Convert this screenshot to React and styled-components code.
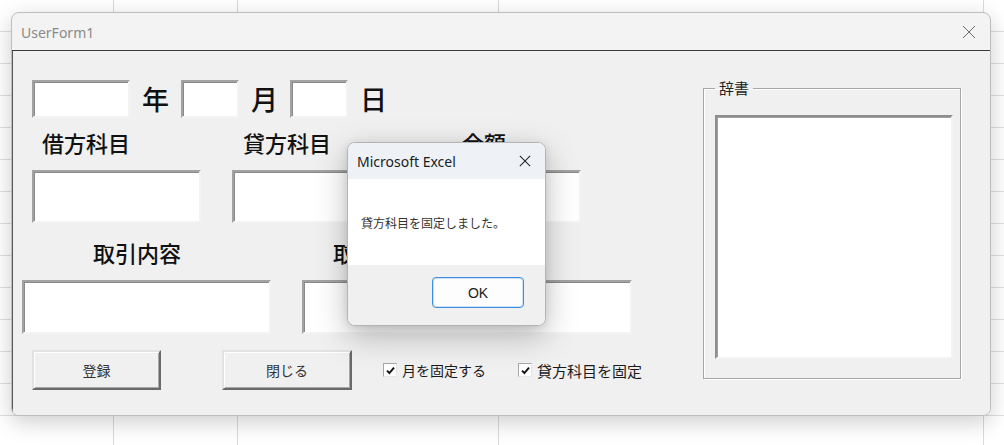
import styled, { createGlobalStyle } from "styled-components";

const GlobalStyle = createGlobalStyle`
  html, body {
    margin: 0;
    padding: 0;
  }
  body {
    width: 1004px;
    height: 445px;
    overflow: hidden;
    font-family: "Noto Sans", "Noto Sans CJK JP", sans-serif;
  }
`;

const Sheet = styled.div`
  position: relative;
  width: 1004px;
  height: 445px;
  box-sizing: border-box;
  padding: 12px 0 0 11px;
  background-color: #fff;
  background-image: linear-gradient(#d9d9d9, #d9d9d9),
    linear-gradient(#d9d9d9, #d9d9d9), linear-gradient(#d9d9d9, #d9d9d9),
    linear-gradient(#d9d9d9, #d9d9d9),
    repeating-linear-gradient(
      to bottom,
      transparent 0,
      transparent 31px,
      #dedede 31px,
      #dedede 32px
    );
  background-size: 1px 100%, 1px 100%, 1px 100%, 1px 100%, 100% 100%;
  background-position: 113px 0, 237px 0, 498px 0, 983px 0, 0 0;
  background-repeat: no-repeat;
`;

const Window = styled.div`
  width: 980px;
  height: 404px;
  box-sizing: border-box;
  display: flex;
  flex-direction: column;
  background: #f3f3f3;
  border: 1px solid #bdbdbd;
  border-radius: 8px;
  box-shadow: 0 6px 22px rgba(0, 0, 0, 0.2);
  overflow: hidden;
`;

const TitleBar = styled.div`
  height: 37px;
  flex-shrink: 0;
  display: flex;
  align-items: center;
  justify-content: space-between;
  padding: 0 14px 0 9px;
  border-bottom: 1px solid #3c3c3c;
`;

const Title = styled.span`
  font-size: 14px;
  color: #8a8a8a;
  padding-top: 2px;
`;

const Client = styled.div`
  flex: 1;
  display: flex;
  background: #f0f0f0;
  border-left: 1px solid #5a5a5a;
`;

const LeftPane = styled.div`
  flex: 1;
  display: flex;
  flex-direction: column;
  padding-left: 9px;
`;

const Row = styled.div`
  display: flex;
  align-items: ${(p) => p.$align || "flex-start"};
  gap: ${(p) => p.$gap || 0}px;
  margin-top: ${(p) => p.$top}px;
  padding-left: ${(p) => p.$left || 0}px;
`;

const TextBox = styled.input`
  display: block;
  width: ${(p) => p.$w}px;
  height: ${(p) => p.$h}px;
  box-sizing: border-box;
  margin: 0;
  padding: 0;
  background: #fff;
  border: 2px solid;
  border-color: #a2a2a2 #f3f3f3 #f3f3f3 #a2a2a2;
  box-shadow: inset 1px 1px 0 #8a8a8a;
  outline: none;
`;

const Unit = styled.span`
  font-family: "Noto Sans CJK JP", sans-serif;
  font-weight: 500;
  font-size: 27px;
  line-height: 38px;
  color: #111;
  margin: 0 12px 0 12px;
`;

const Field = styled.div`
  display: flex;
  flex-direction: column;
  gap: 16px;
  width: ${(p) => p.$w}px;
`;

const FieldLabel = styled.div`
  font-family: "Noto Sans CJK JP", sans-serif;
  font-weight: 500;
  font-size: 22px;
  line-height: 24px;
  color: #111;
  white-space: nowrap;
  padding-left: ${(p) => p.$indent}px;
`;

const Button = styled.button`
  width: ${(p) => p.$w}px;
  height: 40px;
  box-sizing: border-box;
  padding: 0;
  background: #f0f0f0;
  border: 2px solid;
  border-color: #e2e2e2 #6a6a6a #6a6a6a #e2e2e2;
  box-shadow: inset 1px 1px 0 #fff, inset -1px -1px 0 #a8a8a8;
  font-family: "Noto Sans CJK JP", sans-serif;
  font-size: 14px;
  color: #333;
`;

const Check = styled.label`
  display: flex;
  align-items: center;
  gap: 5px;
  height: 40px;
  font-family: "Noto Sans CJK JP", sans-serif;
  font-size: ${(p) => p.$size}px;
  color: #1a1a1a;
`;

const CheckBox = styled.span`
  width: 14px;
  height: 14px;
  box-sizing: border-box;
  display: flex;
  align-items: center;
  justify-content: center;
  background: #fff;
  border: 1px solid;
  border-color: #a8a8a8 #e6e6e6 #e6e6e6 #a8a8a8;
`;

const Frame = styled.fieldset`
  width: 258px;
  height: 300px;
  box-sizing: border-box;
  margin: 28px 29px 0 0;
  padding: 18px 6px 0 11px;
  border: 1px solid #a6a6a6;
  box-shadow: inset 1px 1px 0 #fff, 1px 1px 0 #fff;
`;

const FrameLegend = styled.legend`
  padding: 0 4px;
  font-family: "Noto Sans CJK JP", sans-serif;
  font-size: 15px;
  line-height: 18px;
  color: #222;
`;

const ListBox = styled.div`
  width: 238px;
  height: 244px;
  box-sizing: border-box;
  background: #fff;
  border: 2px solid;
  border-color: #8e8e8e #f3f3f3 #f3f3f3 #8e8e8e;
  box-shadow: inset 1px 1px 0 #a0a0a0;
`;

const Dialog = styled.div`
  position: absolute;
  left: 347px;
  top: 142px;
  width: 199px;
  height: 184px;
  box-sizing: border-box;
  display: flex;
  flex-direction: column;
  border: 1px solid #b4b4b4;
  border-radius: 8px;
  overflow: hidden;
  background: #fff;
  box-shadow: 0 10px 32px rgba(0, 0, 0, 0.26), 0 2px 8px rgba(0, 0, 0, 0.1);
`;

const DialogHead = styled.div`
  height: 36px;
  display: flex;
  align-items: center;
  justify-content: space-between;
  padding: 0 14px 0 9px;
  background: #eef2f7;
`;

const DialogTitle = styled.span`
  font-size: 14px;
  color: #1b1b1b;
`;

const DialogBody = styled.div`
  height: 86px;
  display: flex;
  align-items: center;
  padding-left: 13px;
  font-family: "Noto Sans CJK JP", sans-serif;
  font-size: 12px;
  color: #333;
`;

const DialogFoot = styled.div`
  flex: 1;
  display: flex;
  justify-content: flex-end;
  align-items: flex-start;
  padding: 12px 21px 0 0;
  background: #f0f0f0;
`;

const OkButton = styled.button`
  width: 92px;
  height: 31px;
  box-sizing: border-box;
  padding: 0;
  background: #fdfdfd;
  border: 1px solid #3d8ee0;
  border-radius: 4px;
  box-shadow: inset 0 0 0 1px rgba(61, 142, 224, 0.25);
  font-size: 14px;
  color: #1b1b1b;
`;

const CloseIcon = ({ size, color, width }) => (
  <svg width={size} height={size} viewBox="0 0 14 14">
    <path
      d="M1 1 L13 13 M13 1 L1 13"
      stroke={color}
      strokeWidth={width}
      fill="none"
    />
  </svg>
);

const Tick = () => (
  <svg width="9" height="9" viewBox="0 0 9 9">
    <path
      d="M1 4.6 L3.4 7 L8 1.6"
      stroke="#111"
      strokeWidth="1.9"
      fill="none"
    />
  </svg>
);

export default function App() {
  return (
    <Sheet>
      <GlobalStyle />
      <Window>
        <TitleBar>
          <Title>UserForm1</Title>
          <CloseIcon size={14} color="#6a6a6a" width={1} />
        </TitleBar>
        <Client>
          <LeftPane>
            <Row $top={29} $left={10}>
              <TextBox $w={98} $h={38} />
              <Unit>年</Unit>
              <TextBox $w={58} $h={38} />
              <Unit>月</Unit>
              <TextBox $w={58} $h={38} />
              <Unit>日</Unit>
            </Row>
            <Row $top={12} $left={10} $gap={31}>
              <Field $w={169}>
                <FieldLabel $indent={10}>借方科目</FieldLabel>
                <TextBox $w={169} $h={53} />
              </Field>
              <Field $w={189}>
                <FieldLabel $indent={11}>貸方科目</FieldLabel>
                <TextBox $w={189} $h={53} />
              </Field>
              <Field $w={129}>
                <FieldLabel $indent={10}>金額</FieldLabel>
                <TextBox $w={129} $h={53} />
              </Field>
            </Row>
            <Row $top={17} $gap={31}>
              <Field $w={249}>
                <FieldLabel $indent={71}>取引内容</FieldLabel>
                <TextBox $w={249} $h={54} />
              </Field>
              <Field $w={330}>
                <FieldLabel $indent={31}>取引先</FieldLabel>
                <TextBox $w={330} $h={54} />
              </Field>
            </Row>
            <Row $top={16} $left={10} $align="center">
              <Button $w={129}>登録</Button>
              <Button $w={130} style={{ marginLeft: 61 }}>
                閉じる
              </Button>
              <Row $top={0} $left={31} $gap={32}>
                <Check $size={14}>
                  <CheckBox>
                    <Tick />
                  </CheckBox>
                  月を固定する
                </Check>
                <Check $size={15}>
                  <CheckBox>
                    <Tick />
                  </CheckBox>
                  貸方科目を固定
                </Check>
              </Row>
            </Row>
          </LeftPane>
          <Frame>
            <FrameLegend>辞書</FrameLegend>
            <ListBox />
          </Frame>
        </Client>
      </Window>
      <Dialog>
        <DialogHead>
          <DialogTitle>Microsoft Excel</DialogTitle>
          <CloseIcon size={12} color="#222" width={1.2} />
        </DialogHead>
        <DialogBody>貸方科目を固定しました。</DialogBody>
        <DialogFoot>
          <OkButton>OK</OkButton>
        </DialogFoot>
      </Dialog>
    </Sheet>
  );
}
